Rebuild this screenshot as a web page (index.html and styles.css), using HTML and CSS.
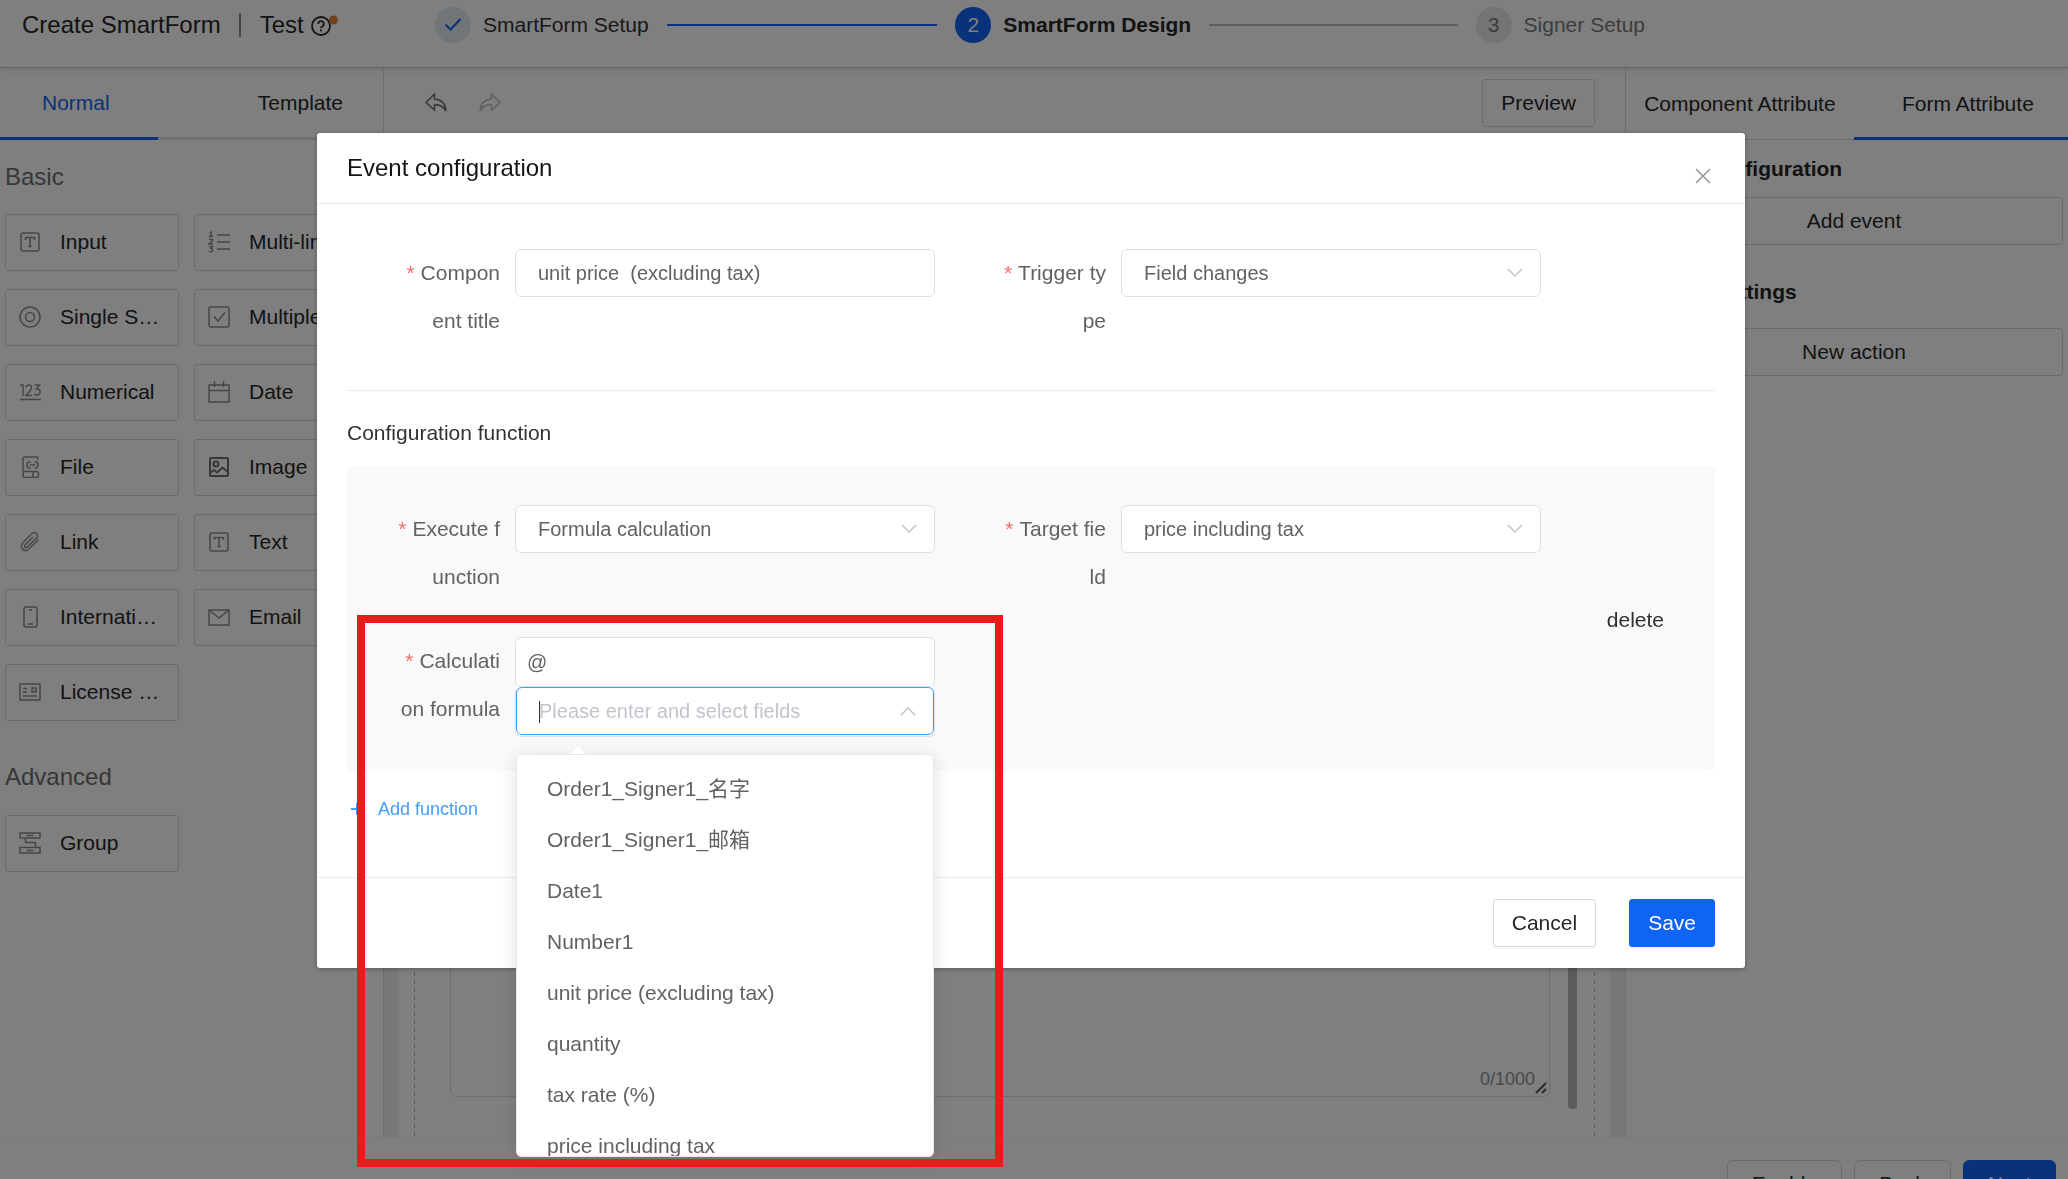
FILE: index.html
```
<!DOCTYPE html>
<html lang="en">
<head>
<meta charset="UTF-8" />
<meta name="viewport" content="width=device-width, initial-scale=1" />
<title>Create SmartForm</title>
<link rel="stylesheet" href="styles.css">
</head>
<body>

<div class="page">
  <header class="header">
    <div class="header-title">
      <span>Create SmartForm</span>
      <span class="separator"></span>
      <span>Test</span>
      <svg class="help" viewBox="0 0 28 24"><circle cx="11" cy="13" r="9" fill="none" stroke="#262626" stroke-width="1.800"/><path d="M8.200 11a2.800 2.800 0 1 1 4.300 2.300q-1.500 .8-1.500 2" fill="none" stroke="#262626" stroke-width="1.800"/><circle cx="11" cy="17.500" r="1.100" fill="#262626"/><circle cx="23.500" cy="7" r="4.500" fill="#e8833a"/></svg>
    </div>
    <ol class="steps">
      <li class="step done">
        <span class="step-icon"><svg width="18" height="14" viewBox="0 0 18 14"><path d="M1.500 6.500l5 5L16.500 1" fill="none" stroke="#1064f4" stroke-width="2"/></svg></span>
        <span>SmartForm Setup</span>
      </li>
      <li class="step active">
        <span class="step-icon">2</span>
        <span>SmartForm Design</span>
      </li>
      <li class="step">
        <span class="step-icon">3</span>
        <span>Signer Setup</span>
      </li>
    </ol>
  </header>

  <div class="workspace">
    <aside class="left-panel">
      <nav class="tabs left-tabs">
        <button class="tab selected blue">Normal</button>
        <button class="tab">Template</button>
      </nav>
      <h2>Basic</h2>
      <div class="cards">
        <button class="card"><svg viewBox="0 0 22 22"><rect x="2" y="2" width="18" height="18" rx="2"/><path d="M6.500 9V6.500h9V9M11 6.500v9M9.500 15.500h3"/></svg><span>Input</span></button>
        <button class="card"><svg viewBox="0 0 22 22"><path d="M9 4h13M9 11h13M9 18h13M1.500 2L3 1v4M1 5.500h4M1 8.500h3.500v1.500L1 13h4M1 15.500h3.500L3 17.500q2 0 1.500 2T1 20.500"/></svg><span>Multi-line</span></button>
        <button class="card"><svg viewBox="0 0 22 22"><circle cx="11" cy="11" r="10"/><circle cx="11" cy="11" r="4.500"/></svg><span>Single Select</span></button>
        <button class="card"><svg viewBox="0 0 22 22"><rect x="1" y="1" width="20" height="20" rx="2"/><path d="M6 10.500l4 4.500 7-8.500"/></svg><span>Multiple Select</span></button>
        <button class="card"><svg viewBox="0 0 22 22"><path d="M1 4h3v11M7 6.500Q7.500 4 10 4t2.500 2.500Q12.500 9 7 14.500h6M15.500 4h5l-3 4q4 0 3.500 3.500T15 13.500M1 18.500h21"/></svg><span>Numerical</span></button>
        <button class="card"><svg viewBox="0 0 22 22"><path d="M1 4h20v17H1zM1 9.500h20M6.500 0v6M15.500 0v6"/></svg><span>Date</span></button>
        <button class="card"><svg viewBox="0 0 22 22"><path d="M4 15V2.500Q4 1 5.500 1H18.500v3M5.500 15.500h12q2 0 2 3t-2 3h-12Q4 21.500 4 18.500t1.500-3M14 15.500v6M11.500 6h-1q-2.500 0-2.500 3t2.500 3h1M15.500 6h1q2.500 0 2.500 3t-2.500 3h-1M11 9h5"/></svg><span>File</span></button>
        <button class="card"><svg class="dark" viewBox="0 0 22 22"><rect x="2" y="2" width="18" height="18" rx="1"/><circle cx="8" cy="8" r="2.500"/><path d="M2 17l4-3 3 2.500 5.500-5L20 16"/></svg><span>Image</span></button>
        <button class="card"><svg viewBox="0 0 22 22"><path d="M14 6l-8 8q-1 2 .5 2.500t2-.5l9-9q2-2.500 0-4.500t-4.500 0l-9 9q-3 3.500-.5 6.500t6 .5L19.500 8.500"/></svg><span>Link</span></button>
        <button class="card"><svg viewBox="0 0 22 22"><rect x="2" y="2" width="18" height="18" rx="2"/><path d="M6.500 9V6.500h9V9M11 6.500v9M9.500 15.500h3"/></svg><span>Text</span></button>
        <button class="card"><svg viewBox="0 0 22 22"><rect x="5" y="1" width="13" height="20" rx="2"/><path d="M10 4h3M9 18h5"/></svg><span>International phone</span></button>
        <button class="card"><svg viewBox="0 0 22 22"><rect x="1" y="4" width="20" height="15"/><path d="M1 4l10 8L21 4"/></svg><span>Email</span></button>
        <button class="card"><svg viewBox="0 0 22 22"><rect x="1" y="3" width="20" height="16"/><path d="M4 7.500h4M4 11h4M4 15h14M13 7h4v4h-4z"/></svg><span>License plate</span></button>
      </div>
      <h2 class="advanced">Advanced</h2>
      <div class="cards">
        <button class="card"><svg viewBox="0 0 22 22"><path d="M1 1h20v5H1zM1 15.500h20v5.500H1zM7.500 3.500h7M7.500 18.500h7M6.500 6v4.500h10v5"/></svg><span>Group</span></button>
      </div>
    </aside>

    <main class="center">
      <div class="toolbar">
        <svg class="arrow" viewBox="0 0 22 20"><path d="M9.500 1L1 9.500l8.500 7.500v-5Q17 11 21 18 20 6.500 9.500 6z"/></svg>
        <svg class="arrow disabled" viewBox="0 0 22 20"><path d="M12.500 1L21 9.500 12.500 17v-5Q5 11 1 18 2 6.500 12.500 6z"/></svg>
        <button class="btn preview">Preview</button>
      </div>
      <div class="canvas">
        <div class="sheet">
          <div class="text-box">
            <span class="counter">0/1000</span>
            <svg class="grip" viewBox="0 0 12 12"><path d="M1 11L11 1M7 11l4-4"/></svg>
          </div>
          <div class="scroll-thumb"></div>
        </div>
      </div>
    </main>

    <aside class="right-panel">
      <nav class="tabs">
        <button class="tab">Component Attribute</button>
        <button class="tab selected">Form Attribute</button>
      </nav>
      <section class="attribute">
        <h3>Event configuration</h3>
        <button class="btn">Add event</button>
      </section>
      <section class="attribute">
        <h3>Action settings</h3>
        <button class="btn">New action</button>
      </section>
    </aside>
  </div>

  <footer class="footer">
    <button class="btn">Enable</button>
    <button class="btn">Back</button>
    <button class="btn primary">Next</button>
  </footer>
</div>

<div class="overlay">
  <div class="modal" role="dialog" aria-labelledby="modalTitle">
    <div class="modal-header">
      <h1 id="modalTitle">Event configuration</h1>
      <button class="close" aria-label="Close"><svg viewBox="0 0 16 16"><path d="M1 1l14 14M15 1L1 15"/></svg></button>
    </div>

    <div class="modal-body">
      <div class="fields top-fields">
        <div class="field">
          <label for="component">Compon<wbr>ent title</label>
          <input class="control" type="text" id="component" value="unit price  (excluding tax)" />
        </div>
        <div class="field">
          <label for="trigger">Trigger ty<wbr>pe</label>
          <div class="select">
            <select class="control" id="trigger"><option>Field changes</option></select>
            <svg class="chevron" viewBox="0 0 16 10"><path d="M1 1l7 7 7-7"/></svg>
          </div>
        </div>
      </div>

      <h2 class="section-title">Configuration function</h2>

      <div class="function">
        <div class="fields">
          <div class="field">
            <label for="execute">Execute f<wbr>unction</label>
            <div class="select">
              <select class="control" id="execute"><option>Formula calculation</option></select>
              <svg class="chevron" viewBox="0 0 16 10"><path d="M1 1l7 7 7-7"/></svg>
            </div>
          </div>
          <div class="field">
            <label for="target">Target fie<wbr>ld</label>
            <div class="select">
              <select class="control" id="target"><option>price including tax</option></select>
              <svg class="chevron" viewBox="0 0 16 10"><path d="M1 1l7 7 7-7"/></svg>
            </div>
          </div>
          <div class="field">
            <label for="formula">Calculati<wbr>on formula</label>
            <div class="formula">
              <input class="control formula-text" type="text" id="formula" value="@" />
              <div class="select search">
                <input class="control" type="text" placeholder="Please enter and select fields" aria-label="Fields" />
                <span class="caret"></span>
                <svg class="chevron" viewBox="0 0 16 10"><path d="M1 9l7-7 7 7"/></svg>
              </div>
              <div class="dropdown">
                <ul>
                  <li>Order1_Signer1_名字</li>
                  <li>Order1_Signer1_邮箱</li>
                  <li>Date1</li>
                  <li>Number1</li>
                  <li>unit price (excluding tax)</li>
                  <li>quantity</li>
                  <li>tax rate (%)</li>
                  <li>price including tax</li>
                </ul>
              </div>
            </div>
          </div>
        </div>
        <button class="delete">delete</button>
      </div>

      <button class="add"><svg viewBox="0 0 14 14"><path d="M7 1v12M1 7h12"/></svg>Add function</button>
    </div>

    <div class="modal-footer">
      <button class="btn">Cancel</button>
      <button class="btn primary">Save</button>
    </div>
  </div>
</div>

<div class="highlight"></div>

</body>
</html>
```

FILE: styles.css
```
* {
  box-sizing: border-box;
}

body {
  margin: 0;
  height: 100vh;
  overflow: hidden;
  font-family: "Liberation Sans", Arial, "Noto Sans CJK SC", sans-serif;
  font-size: 21px;
  color: #262626;
  background: #fff;
}

button, input, select {
  font: inherit;
  color: inherit;
}

button {
  padding: 0;
  border: none;
  background: none;
  cursor: pointer;
}

h1, h2, h3, ul, ol {
  margin: 0;
  padding: 0;
  font-weight: normal;
  list-style: none;
}

.page {
  height: 100vh;
  display: flex;
  flex-direction: column;
}

.btn {
  height: 48px;
  padding: 0 18px;
  border: 1px solid #d9d9d9;
  border-radius: 3px;
  background: #fff;
}

.btn.primary {
  background: #1064f4;
  border-color: #1064f4;
  color: #fff;
}

/* Header */
.header {
  flex: none;
  display: flex;
  align-items: flex-start;
  height: 68px;
  border-bottom: 1px solid #c8c8c8;
  box-shadow: 0 2px 6px rgba(20, 30, 90, 0.12);
}

.header-title {
  flex: 0 0 435px;
  display: flex;
  align-items: center;
  height: 50px;
  padding-left: 22px;
  font-size: 24px;
  white-space: nowrap;
}

.separator {
  width: 2px;
  height: 24px;
  margin: 0 19px 0 18px;
  background: #8c8c8c;
}

.help {
  width: 28px;
  height: 24px;
  margin-left: 6px;
}

.steps {
  flex: 1;
  display: flex;
  margin-right: 423px;
}

.step {
  display: flex;
  align-items: center;
  gap: 12px;
  height: 50px;
  color: #7a7a7a;
  white-space: nowrap;
}

.step:not(:last-child) {
  flex: 1;
}

.step:not(:last-child)::after {
  content: "";
  flex: 1;
  height: 2px;
  margin: 0 18px 0 6px;
  background: #bfbfbf;
}

.step-icon {
  display: flex;
  align-items: center;
  justify-content: center;
  width: 36px;
  height: 36px;
  border-radius: 50%;
  background: #e8e8e8;
}

.step.done {
  color: #333;
}

.step.done .step-icon {
  background: #e2ebf0;
}

.step.done::after {
  background: #1064f4 !important;
}

.step.active {
  color: #262626;
  font-weight: bold;
}

.step.active .step-icon {
  background: #1064f4;
  color: #fff;
  font-weight: normal;
}

/* Workspace */
.workspace {
  flex: 1;
  min-height: 0;
  display: flex;
}

.left-panel {
  flex: 0 0 384px;
  border-right: 1px solid #dcdcdc;
}

.tabs {
  display: flex;
  height: 72px;
  border-bottom: 1px solid #dcdcdc;
}

.tab {
  height: 72px;
  border-bottom: 3px solid transparent;
}

.tab.selected {
  border-color: #1064f4;
}

.tab.blue {
  color: #1064f4;
}

.left-tabs {
  justify-content: space-between;
  border-bottom: 3px solid #e4e4e4;
}

.left-tabs .tab {
  min-width: 158px;
  padding: 0 40px 0 42px;
  text-align: left;
}

.left-panel h2 {
  margin: 21px 5px;
  font-size: 24px;
  line-height: 32px;
  color: #6e6e6e;
}

.left-panel h2.advanced {
  margin: 40px 5px 22px;
}

.cards {
  display: grid;
  grid-template-columns: 174px 174px;
  gap: 18px 15px;
  padding-left: 5px;
}

.card {
  display: flex;
  align-items: center;
  gap: 19px;
  height: 57px;
  padding: 0 17px 2px 13px;
  border: 1px solid #d9d9d9;
  border-radius: 3px;
  text-align: left;
}

.card svg {
  flex: none;
  width: 22px;
  height: 22px;
  fill: none;
  stroke: #8c8c8c;
  stroke-width: 1.500;
}

.card svg.dark {
  stroke: #6e6e6e;
  stroke-width: 2;
}

.card span {
  overflow: hidden;
  text-overflow: ellipsis;
  white-space: nowrap;
}

.center {
  flex: 1;
  min-width: 0;
  display: flex;
  flex-direction: column;
}

.toolbar {
  display: flex;
  align-items: center;
  height: 72px;
  padding: 0 30px 2px 41px;
}

.arrow {
  width: 22px;
  height: 20px;
  margin-right: 32px;
  fill: none;
  stroke: #6e6e6e;
  stroke-width: 1.500;
}

.arrow.disabled {
  stroke: #bfbfbf;
}

.preview {
  margin-left: auto;
}

.canvas {
  flex: 1;
  display: flex;
  padding: 0 15px;
  background: #eef1f5;
}

.sheet {
  flex: 1;
  display: flex;
  align-items: stretch;
  padding: 30px 33px 28px 51px;
  background: linear-gradient(#bbb 50%, transparent 50%) 15px 0 / 1px 8px repeat-y,
    linear-gradient(#bbb 50%, transparent 50%) right 15px top 0 / 1px 8px repeat-y,
    #fff;
}

.text-box {
  flex: 1;
  display: flex;
  align-items: flex-end;
  justify-content: flex-end;
  margin-bottom: 12px;
  padding: 0 2px 2px 0;
  border: 1px solid #dcdfe6;
  border-radius: 6px;
}

.counter {
  padding-bottom: 4px;
  font-size: 18px;
  color: #909399;
}

.grip {
  width: 12px;
  height: 12px;
  fill: none;
  stroke: #555;
  stroke-width: 2;
}

.scroll-thumb {
  width: 9px;
  margin-left: 18px;
  border-radius: 4px;
  background: #b4b6ba;
}

.right-panel {
  flex: 0 0 443px;
  border-left: 1px solid #dcdcdc;
}

.right-panel .tab {
  flex: 1 0 auto;
  padding: 2px 18px 0;
}

.right-panel .tab.selected {
  padding: 2px 34px 0 48px;
}

.attribute {
  display: flex;
  flex-direction: column;
  margin-bottom: 32px;
  padding: 14px 5px 0 19px;
}

.attribute h3 {
  margin-bottom: 13px;
  font-size: 21px;
  font-weight: bold;
  line-height: 30px;
}

.attribute + .attribute h3 {
  margin-bottom: 21px;
}

.attribute + .attribute {
  padding-top: 0;
}

.footer {
  flex: 0 0 42px;
  min-height: 0;
  display: flex;
  align-items: flex-start;
  justify-content: flex-end;
  gap: 12px;
  padding: 22px 12px 0;
  border-top: 1px solid #f5f5f5;
}

.footer .btn {
  flex: none;
  padding: 0 24px;
  border-radius: 6px;
}

/* Modal */
.overlay {
  position: fixed;
  inset: 0;
  display: flex;
  align-items: flex-start;
  justify-content: center;
  padding: 133px 6px 0 0;
  background: rgba(0, 0, 0, 0.5);
}

.modal {
  width: 1428px;
  max-width: 92%;
  border-radius: 3px;
  background: #fff;
  box-shadow: 0 1px 5px rgba(0, 0, 0, 0.3);
}

.modal-header {
  display: flex;
  justify-content: space-between;
  height: 71px;
  padding: 0 34px 0 30px;
  border-bottom: 1px solid #ebebeb;
}

.modal-header h1 {
  font-size: 24px;
  line-height: 70px;
  color: #141414;
}

.close {
  padding-top: 16px;
}

.close svg {
  display: block;
  width: 16px;
  height: 16px;
  fill: none;
  stroke: #909399;
  stroke-width: 1.500;
}

.modal-body {
  padding: 45px 30px 0;
  color: #606266;
}

.fields {
  flex: 1;
  display: grid;
  grid-template-columns: 1fr 1fr;
  gap: 36px 67px;
}

.top-fields {
  padding: 0 174px 45px 49px;
  border-bottom: 1px solid #e8eaf0;
}

.field {
  display: flex;
  align-items: flex-start;
}

.field label {
  flex: 0 0 119px;
  padding-right: 15px;
  line-height: 48px;
  text-align: right;
}

.field label::before {
  content: "*";
  margin-right: 6px;
  color: #f56c6c;
}

.control {
  display: block;
  flex: 1;
  width: 100%;
  min-width: 0;
  height: 48px;
  padding: 0 22px;
  border: 1px solid #dcdfe6;
  border-radius: 6px;
  outline: none;
  appearance: none;
  background: #fff;
  font-size: 20px;
}

.control::placeholder {
  color: #c0c4cc;
  opacity: 1;
}

.select {
  position: relative;
  flex: 1;
}

.chevron {
  position: absolute;
  top: 19px;
  right: 18px;
  width: 16px;
  height: 10px;
  fill: none;
  stroke: #c0c4cc;
  stroke-width: 1.500;
  pointer-events: none;
}

.section-title {
  padding: 27px 0 18px;
  font-size: 21px;
  line-height: 30px;
  color: #303133;
}

.function {
  display: flex;
  align-items: center;
  padding: 39px 51px 34px 49px;
  border-radius: 6px;
  background: #f9f9f9;
}

.delete {
  margin-left: 66px;
  padding-bottom: 3px;
  color: #303133;
}

.formula {
  position: relative;
  flex: 1;
}

.formula-text {
  height: 50px;
  padding: 0 11px;
}

.search {
  height: 50px;
  border: 1px solid #dcdfe6;
  border-top: none;
  border-radius: 6px;
  background: #fff;
}

.search .control {
  border-color: #409eff;
}

.caret {
  position: absolute;
  top: 14px;
  left: 23px;
  width: 1px;
  height: 22px;
  background: #303133;
}

.dropdown {
  position: absolute;
  top: 117px;
  left: 1px;
  right: 1px;
  border-radius: 6px;
  background: #fff;
  box-shadow: 0 3px 18px rgba(0, 0, 0, 0.12);
}

.dropdown::before {
  content: "";
  position: absolute;
  top: -8px;
  left: 54px;
  border: 8px solid transparent;
  border-top: none;
  border-bottom-color: #fff;
}

.dropdown ul {
  height: 403px;
  padding: 8px 0;
  border: 1px solid #e4e7ed;
  border-radius: 6px;
  overflow: hidden;
}

.dropdown li {
  padding: 0 30px;
  line-height: 51px;
}

.add {
  display: flex;
  align-items: center;
  gap: 14px;
  height: 76px;
  font-size: 18px;
  color: #409eff;
}

.add svg {
  width: 14px;
  height: 14px;
  margin-left: 3px;
  stroke: #409eff;
  stroke-width: 2;
}

.modal-footer {
  display: flex;
  justify-content: flex-end;
  gap: 33px;
  margin-top: 30px;
  padding: 21px 30px;
  border-top: 1px solid #ebebeb;
}

.modal-footer .btn {
  box-shadow: 0 2px 1px rgba(0, 0, 0, 0.03);
}

/* Marked area */
.highlight {
  position: fixed;
  top: 615px;
  left: 357px;
  width: 646px;
  height: 552px;
  border: 8px solid #e81c1c;
  pointer-events: none;
}
```
